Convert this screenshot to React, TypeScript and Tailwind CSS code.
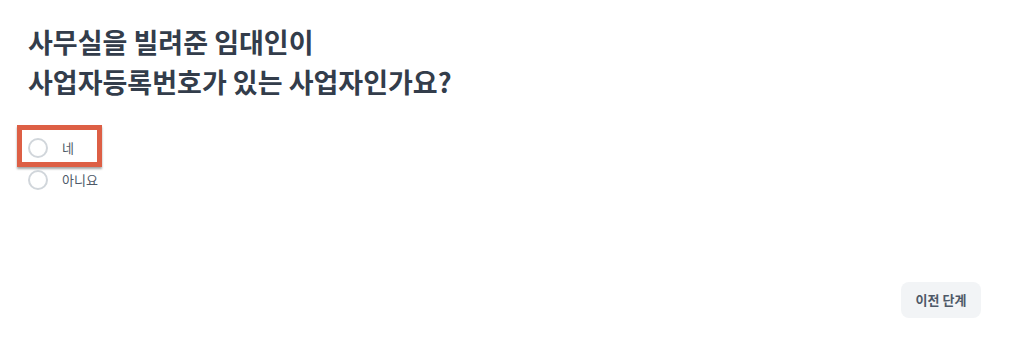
import React from "react";

const options = ["네", "아니요"];

const Radio = ({ label }: { label: string }) => (
  <label className="flex h-8 items-center gap-[14px] cursor-pointer">
    <span className="h-[20px] w-[20px] rounded-full border-2 border-[#d1d6db] bg-white" />
    <span className="text-[13px] text-[#4e5968]">{label}</span>
  </label>
);

export default function App() {
  return (
    <div
      className="flex h-[355px] w-full flex-col bg-white"
      style={{ fontFamily: '"Noto Sans CJK KR", "Noto Sans", sans-serif' }}
    >
      <div className="pl-[28px] pt-[22px]">
        <h1 className="text-[27px] font-bold leading-[40px] text-[#333d4b]">
          사무실을 빌려준 임대인이
          <br />
          사업자등록번호가 있는 사업자인가요?
        </h1>

        <div className="mt-[30px] flex flex-col">
          {options.map((opt, i) => (
            <div key={opt} className="relative">
              {/* annotation box around the first choice */}
              {i === 0 && (
                <span className="pointer-events-none absolute left-[-11px] top-[-7px] h-[42px] w-[85px] border-[5px] border-[#dd5f45] shadow-[0_2px_2px_rgba(0,0,0,0.35)]" />
              )}
              <Radio label={opt} />
            </div>
          ))}
        </div>
      </div>

      <div className="mt-auto flex justify-end pb-[37px] pr-[43px]">
        <button className="h-9 w-20 rounded-lg bg-[#f2f4f6] text-[13px] font-semibold text-[#4e5968]">
          이전 단계
        </button>
      </div>
    </div>
  );
}
